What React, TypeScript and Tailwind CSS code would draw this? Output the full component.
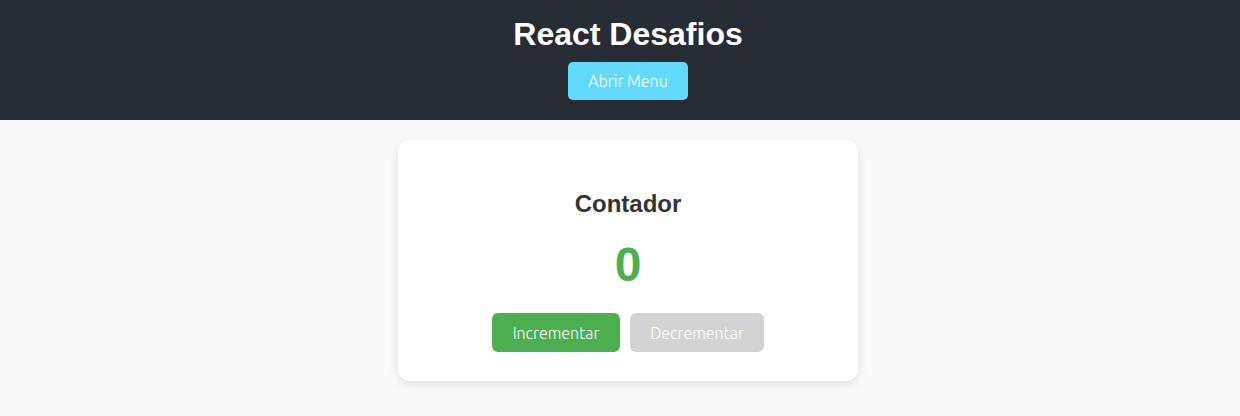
import React, { useState } from 'react';

const btnFont = { fontFamily: 'Ubuntu, "Open Sans", sans-serif' };

const App: React.FC = () => {
  const [count, setCount] = useState(0);

  return (
    <div className="min-h-[416px] bg-[#f9f9f9] font-['Liberation_Sans',Arial,sans-serif]">
      <header className="bg-[#282c34] flex flex-col items-center pt-[16px] pl-[16px] h-[120px]">
        <h1 className="text-[32px] leading-[36px] font-bold text-white">React Desafios</h1>
        <button
          style={btnFont}
          className="mt-[10px] w-[120px] h-[38px] rounded-[5px] bg-[#61dafb] text-white text-[16px] font-light"
        >
          Abrir Menu
        </button>
      </header>

      <main className="flex justify-center pt-[20px] pl-[16px]">
        <div className="w-[460px] bg-white rounded-[12px] shadow-[0_4px_10px_rgba(0,0,0,0.1)] flex flex-col items-center pt-[50px] pb-[29px]">
          <h2 className="text-[24px] leading-[28px] font-bold text-[#333]">Contador</h2>
          <div className="mt-[23px] text-[48px] leading-[48px] font-bold text-[#4caf50]">{count}</div>
          <div className="mt-[24px] flex gap-[10px]">
            <button
              style={btnFont}
              onClick={() => setCount(count + 1)}
              className="w-[128px] h-[39px] rounded-[6px] bg-[#4caf50] text-white text-[16px] font-light"
            >
              Incrementar
            </button>
            <button
              style={btnFont}
              disabled={count === 0}
              onClick={() => setCount(count - 1)}
              className="w-[134px] h-[39px] rounded-[6px] bg-[#d3d3d3] text-white text-[16px] font-light"
            >
              Decrementar
            </button>
          </div>
        </div>
      </main>
    </div>
  );
};

export default App;
